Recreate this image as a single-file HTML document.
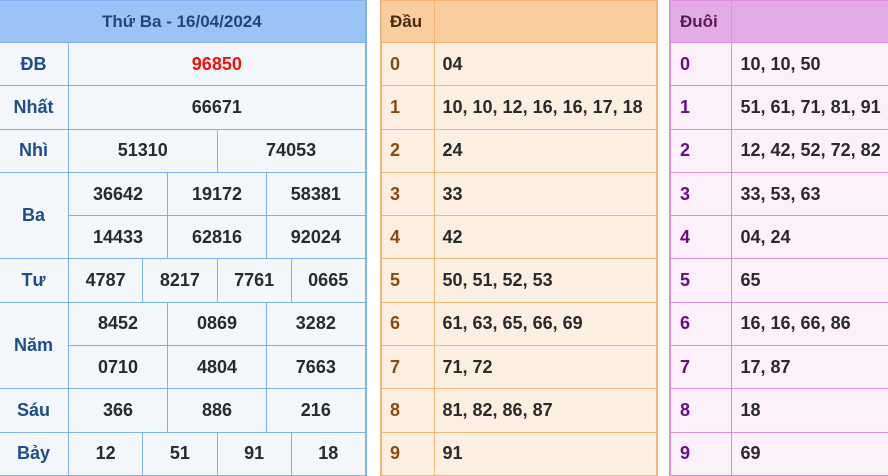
<!DOCTYPE html>
<html><head><meta charset="utf-8"><style>
body{margin:0;width:888px;height:472px;overflow:hidden;background:#fff;font-family:"Liberation Sans",Arial,sans-serif;font-weight:bold;font-size:18px;color:#2a2a2a}
table{border-collapse:collapse;position:absolute;top:0;table-layout:fixed}
td{padding:0;box-sizing:border-box;white-space:nowrap}
#L{left:-2px;width:367px;background:#f3f6fa}
#L td{border:1px solid #7fb0f0;text-align:center;height:43.3px}
#L .h{background:#9cc3f7;color:#1f4a78;height:42px;font-size:17px}
#L .lb{color:#1c4f8c}
#M{left:380px;width:276px;background:#fdeee2}
#M td{border:1px solid #f5b575;padding-left:8px;height:43.3px}
#M .h{background:#f9cd9e;height:42px;color:#4a2a10;font-size:17px}
#M .lb{color:#8b4a12}
#R{left:669px;width:221px;background:#fcf1fb}
#R td{border:1px solid #db91e2;padding-left:9px;height:43.3px}
#R .h{background:#e3abe8;height:42px;color:#5a1a50;font-size:17px}
#R .lb{color:#6a0d86}
#M td:first-child,#R td:first-child{border-left-width:2px}
#M td:last-child{border-right-width:2px}
#L td:last-child{border-right-width:2px}
</style></head><body>
<table id="L">
<colgroup><col style="width:70px"><col span="12" style="width:24.75px"></colgroup>
<tr><td class="h" colspan="13">Thứ Ba - 16/04/2024</td></tr>
<tr><td class="lb">ĐB</td><td colspan="12" style="color:#f01010">96850</td></tr>
<tr><td class="lb">Nhất</td><td colspan="12">66671</td></tr>
<tr><td class="lb">Nhì</td><td colspan="6">51310</td><td colspan="6">74053</td></tr>
<tr><td class="lb" rowspan="2">Ba</td><td colspan="4">36642</td><td colspan="4">19172</td><td colspan="4">58381</td></tr>
<tr><td colspan="4">14433</td><td colspan="4">62816</td><td colspan="4">92024</td></tr>
<tr><td class="lb">Tư</td><td colspan="3">4787</td><td colspan="3">8217</td><td colspan="3">7761</td><td colspan="3">0665</td></tr>
<tr><td class="lb" rowspan="2">Năm</td><td colspan="4">8452</td><td colspan="4">0869</td><td colspan="4">3282</td></tr>
<tr><td colspan="4">0710</td><td colspan="4">4804</td><td colspan="4">7663</td></tr>
<tr><td class="lb">Sáu</td><td colspan="4">366</td><td colspan="4">886</td><td colspan="4">216</td></tr>
<tr><td class="lb">Bảy</td><td colspan="3">12</td><td colspan="3">51</td><td colspan="3">91</td><td colspan="3">18</td></tr>
</table>
<table id="M">
<colgroup><col style="width:53px"><col style="width:223px"></colgroup>
<tr><td class="h">Đầu</td><td class="h"></td></tr>
<tr><td class="lb">0</td><td>04</td></tr>
<tr><td class="lb">1</td><td>10, 10, 12, 16, 16, 17, 18</td></tr>
<tr><td class="lb">2</td><td>24</td></tr>
<tr><td class="lb">3</td><td>33</td></tr>
<tr><td class="lb">4</td><td>42</td></tr>
<tr><td class="lb">5</td><td>50, 51, 52, 53</td></tr>
<tr><td class="lb">6</td><td>61, 63, 65, 66, 69</td></tr>
<tr><td class="lb">7</td><td>71, 72</td></tr>
<tr><td class="lb">8</td><td>81, 82, 86, 87</td></tr>
<tr><td class="lb">9</td><td>91</td></tr>
</table>
<table id="R">
<colgroup><col style="width:61px"><col style="width:160px"></colgroup>
<tr><td class="h">Đuôi</td><td class="h"></td></tr>
<tr><td class="lb">0</td><td>10, 10, 50</td></tr>
<tr><td class="lb">1</td><td>51, 61, 71, 81, 91</td></tr>
<tr><td class="lb">2</td><td>12, 42, 52, 72, 82</td></tr>
<tr><td class="lb">3</td><td>33, 53, 63</td></tr>
<tr><td class="lb">4</td><td>04, 24</td></tr>
<tr><td class="lb">5</td><td>65</td></tr>
<tr><td class="lb">6</td><td>16, 16, 66, 86</td></tr>
<tr><td class="lb">7</td><td>17, 87</td></tr>
<tr><td class="lb">8</td><td>18</td></tr>
<tr><td class="lb">9</td><td>69</td></tr>
</table>
</body></html>
